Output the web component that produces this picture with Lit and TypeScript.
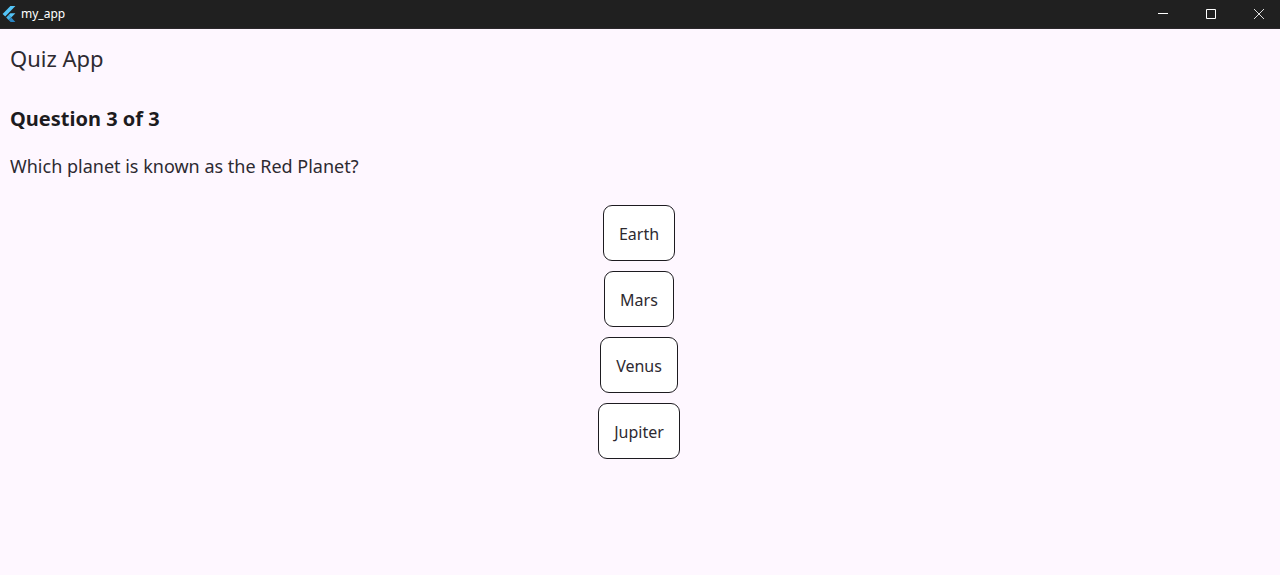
import { LitElement, html, css } from "lit";
import { customElement, state } from "lit/decorators.js";

@customElement("app-root")
export class AppRoot extends LitElement {
  static styles = css`
    :host {
      display: flex;
      flex-direction: column;
      min-height: 100vh;
      background: #fef7ff;
      color: #1d1b20;
      font-family: "Noto Sans", "Open Sans", sans-serif;
    }
    .titlebar {
      display: flex;
      align-items: center;
      height: 28px;
      border-bottom: 1px solid #2b272b;
      background: #202020;
      color: #fff;
    }
    .logo {
      width: 14px;
      height: 16px;
      margin: 0 5px 0 2px;
    }
    .name {
      flex: 1;
      font-size: 12px;
      line-height: 16px;
    }
    .controls {
      display: flex;
      align-self: stretch;
      gap: 6px;
    }
    .control {
      display: grid;
      place-items: center;
      width: 42px;
      padding: 0;
      border: 0;
      background: none;
      color: inherit;
    }
    .control svg {
      width: 12px;
      height: 12px;
    }
    main {
      padding: 13px 10px;
    }
    h1,
    h2,
    p {
      margin: 0;
      line-height: 32px;
    }
    h1 {
      color: #2d2a31;
      font-size: 22px;
      font-weight: 400;
    }
    h2 {
      margin-top: 29px;
      font-size: 20px;
      font-weight: 700;
    }
    p {
      margin-top: 15px;
      color: #2d2a31;
      font-size: 18px;
    }
    .answers {
      display: flex;
      flex-direction: column;
      align-items: center;
      gap: 10px;
      margin: 23px 2px 0 0;
    }
    .answer {
      height: 56px;
      padding: 1px 15px 0;
      border: 1px solid #1d1b20;
      border-radius: 9px;
      background: #fff;
      color: #2d2a31;
      font: inherit;
      font-size: 16px;
    }
  `;

  @state() private answers = ["Earth", "Mars", "Venus", "Jupiter"];

  render() {
    return html`
      <header class="titlebar">
        <svg class="logo" viewBox="0 0 14 16" aria-hidden="true">
          <path fill="#54c5f8" d="M8.4 0H13.4L3.2 10.4.6 8z" />
          <path fill="#54c5f8" d="M8.4 7.2H13.4L9.2 11.5 6.6 9.1z" />
          <path fill="#45b5ea" d="M4.2 11.5 6.6 9.1 9.2 11.5 6.6 13.9z" />
          <path fill="#2b86c4" d="M6.6 13.9 9.2 11.5 13.4 16H8.6z" />
        </svg>
        <span class="name">my_app</span>
        <div class="controls">
          <button class="control" aria-label="Minimize">
            <svg viewBox="0 0 12 12"><path d="M1 5.5h10" stroke="#fff" /></svg>
          </button>
          <button class="control" aria-label="Maximize">
            <svg viewBox="0 0 12 12">
              <path d="M1.5 1.5h9v9h-9z" fill="none" stroke="#fff" />
            </svg>
          </button>
          <button class="control" aria-label="Close">
            <svg viewBox="0 0 12 12"><path d="M1 1l10 10M11 1 1 11" stroke="#ddd" /></svg>
          </button>
        </div>
      </header>
      <main>
        <h1>Quiz App</h1>
        <h2>Question 3 of 3</h2>
        <p>Which planet is known as the Red Planet?</p>
        <div class="answers">
          ${this.answers.map((a) => html`<button class="answer">${a}</button>`)}
        </div>
      </main>
    `;
  }
}
